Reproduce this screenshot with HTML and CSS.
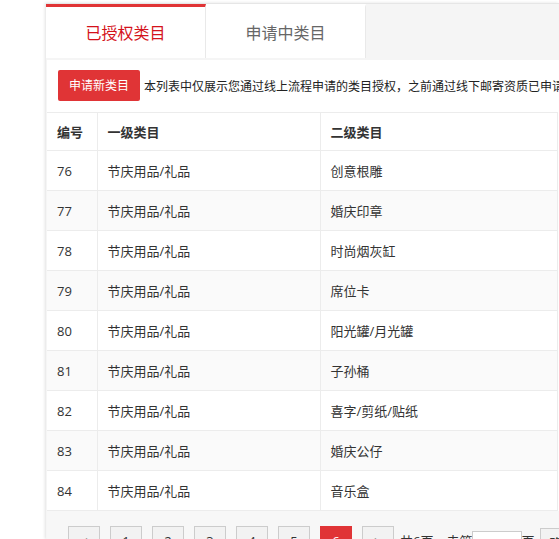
FILE: index.html
```html
<!DOCTYPE html>
<html lang="zh-CN">
<head>
<meta charset="utf-8">
<title>类目管理</title>
<link rel="stylesheet" href="styles.css">
</head>
<body>
<div class="page">
  <div class="tabs">
    <div class="tab active">已授权类目</div>
    <div class="tab">申请中类目</div>
  </div>
  <div class="panel">
    <div class="toolbar">
      <button class="btn-primary">申请新类目</button>
      <span class="notice">本列表中仅展示您通过线上流程申请的类目授权，之前通过线下邮寄资质已申请的类目授权请联系客服查询</span>
    </div>
    <table class="grid">
      <colgroup>
        <col class="c-id"><col class="c-l1"><col class="c-l2">
      </colgroup>
      <thead>
        <tr><th>编号</th><th>一级类目</th><th>二级类目</th></tr>
      </thead>
      <tbody>
        <tr><td>76</td><td>节庆用品/礼品</td><td>创意根雕</td></tr>
        <tr><td>77</td><td>节庆用品/礼品</td><td>婚庆印章</td></tr>
        <tr><td>78</td><td>节庆用品/礼品</td><td>时尚烟灰缸</td></tr>
        <tr><td>79</td><td>节庆用品/礼品</td><td>席位卡</td></tr>
        <tr><td>80</td><td>节庆用品/礼品</td><td>阳光罐/月光罐</td></tr>
        <tr><td>81</td><td>节庆用品/礼品</td><td>子孙桶</td></tr>
        <tr><td>82</td><td>节庆用品/礼品</td><td>喜字/剪纸/贴纸</td></tr>
        <tr><td>83</td><td>节庆用品/礼品</td><td>婚庆公仔</td></tr>
        <tr><td>84</td><td>节庆用品/礼品</td><td>音乐盒</td></tr>
      </tbody>
    </table>
    <div class="footer">
      <div class="pager">
        <span class="pg">&lt;</span>
        <span class="pg">1</span>
        <span class="pg">2</span>
        <span class="pg">3</span>
        <span class="pg">4</span>
        <span class="pg">5</span>
        <span class="pg current">6</span>
        <span class="pg">&gt;</span>
        <span class="pg-text">共6页，去第</span>
        <input class="pg-input" type="text" value="6">
        <span class="pg-text">页</span>
        <span class="pg pg-go">确定</span>
      </div>
    </div>
  </div>
</div>
</body>
</html>
```

FILE: styles.css
```css
* { box-sizing: border-box; }

html, body {
  margin: 0;
  padding: 0;
  background: #fff;
  overflow: hidden;
}

body {
  font-family: "Open Sans", "Noto Sans CJK SC", sans-serif;
  color: #333;
  font-size: 13px;
}

.page {
  margin: 3px 0 0 46px;
  width: 513px;
  height: 536px;
  background: #f5f5f5;
  border-top: 1px solid #e6e6e6;
  box-shadow: -1px 0 3px rgba(0, 0, 0, 0.12);
  overflow: hidden;
}

.tabs {
  display: flex;
  height: 54px;
}

.tab {
  width: 160px;
  background: #fff;
  border-right: 1px solid #e9e9e9;
  display: flex;
  align-items: center;
  justify-content: center;
  font-size: 16px;
  color: #666;
  border-top: 3px solid transparent;
  padding-bottom: 1px;
}

.tab.active {
  border-top-color: #e03436;
  color: #d4121b;
}

.panel {
  margin: 2px 0 0 1px;
  background: #fff;
  width: 540px;
}

.toolbar {
  display: flex;
  align-items: center;
  padding: 10px 0 11px 11px;
  white-space: nowrap;
  overflow: hidden;
}

.btn-primary {
  flex: none;
  height: 31px;
  padding: 0 11px;
  border: none;
  border-radius: 2px;
  background: #e03436;
  color: #fff;
  font-family: inherit;
  font-size: 12px;
  line-height: 31px;
}

.notice {
  margin-left: 4px;
  font-size: 12px;
  color: #222;
}

.grid {
  width: 510px;
  border-collapse: collapse;
  table-layout: fixed;
}

.c-id { width: 50px; }
.c-l1 { width: 223px; }
.c-l2 { width: 237px; }

.grid th,
.grid td {
  height: 40px;
  padding: 0 10px;
  text-align: left;
  border: 1px solid #ececec;
  border-top: none;
  font-size: 13px;
  white-space: nowrap;
}

.grid th {
  height: 38px;
  border-top: 1px solid #ececec;
  font-weight: bold;
  color: #333;
}

.grid th:first-child,
.grid td:first-child { border-left: none; }

.grid tbody tr:nth-child(even) td { background: #fafafa; }

.footer {
  background: #f7f7f7;
  height: 40px;
  padding: 15px 0 0 21px;
}

.pager {
  display: flex;
  align-items: flex-start;
  white-space: nowrap;
}

.pg {
  flex: none;
  width: 32px;
  height: 30px;
  margin-right: 10px;
  border: 1px solid #cccccc;
  background: #f2f2f2;
  text-align: center;
  line-height: 28px;
  font-size: 13px;
  color: #333;
}

.pg.current {
  background: #e03436;
  border-color: #e03436;
  color: #fff;
}

.pg-text {
  margin: 5px 0 0 -4px;
  font-size: 13px;
  color: #333;
}

.pg-input {
  margin: 5px 3px 0 0;
  width: 50px;
  height: 28px;
  border: 1px solid #cccccc;
  background: #fff;
  text-align: center;
  font-family: inherit;
  font-size: 13px;
}

.pg-text + .pg-go {
  margin-left: 6px;
  margin-top: 2px;
  width: 44px;
}
```
